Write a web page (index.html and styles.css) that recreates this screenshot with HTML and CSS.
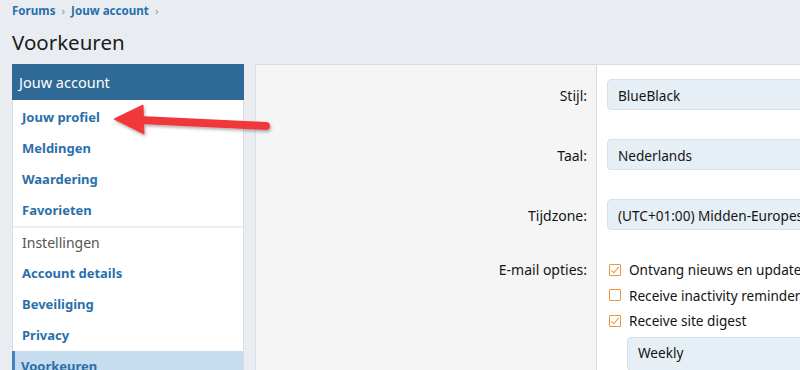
FILE: index.html
```html
<!DOCTYPE html>
<html lang="nl">
<head>
  <meta charset="utf-8">
  <title>Voorkeuren</title>
  <link rel="stylesheet" href="styles.css">
</head>
<body>
  <nav class="crumbs">
    <a href="#">Forums</a><span class="sep">&rsaquo;</span><a href="#">Jouw account</a><span class="sep">&rsaquo;</span>
  </nav>
  <h1 class="title">Voorkeuren</h1>

  <div class="page">
    <aside class="side">
      <h2 class="side-head">Jouw account</h2>
      <ul class="side-list first">
        <li><a href="#">Jouw profiel</a></li>
        <li><a href="#">Meldingen</a></li>
        <li><a href="#">Waardering</a></li>
        <li><a href="#">Favorieten</a></li>
      </ul>
      <h3 class="side-sub">Instellingen</h3>
      <ul class="side-list">
        <li><a href="#">Account details</a></li>
        <li><a href="#">Beveiliging</a></li>
        <li><a href="#">Privacy</a></li>
        <li class="active"><a href="#">Voorkeuren</a></li>
      </ul>
    </aside>

    <main class="form">
      <div class="row">
        <label class="label">Stijl:</label>
        <div class="field"><div class="select">BlueBlack</div></div>
      </div>
      <div class="row">
        <label class="label">Taal:</label>
        <div class="field"><div class="select">Nederlands</div></div>
      </div>
      <div class="row">
        <label class="label">Tijdzone:</label>
        <div class="field"><div class="select">(UTC+01:00) Midden-Europese standaardtijd</div></div>
      </div>
      <div class="row row-checks">
        <label class="label">E-mail opties:</label>
        <div class="field">
          <div class="check on"><span class="box"></span>Ontvang nieuws en update e-mails</div>
          <div class="check"><span class="box"></span>Receive inactivity reminder e-mails</div>
          <div class="check on"><span class="box"></span>Receive site digest</div>
          <div class="select sub">Weekly</div>
        </div>
      </div>
    </main>
  </div>

  <svg class="arrow" width="170" height="50" viewBox="105 100 170 50">
    <g fill="#f0393b" stroke="#f0393b" filter="url(#sh)">
      <line x1="140" y1="120" x2="266" y2="126" stroke-width="8" stroke-linecap="round"/>
      <polygon points="114,119 143,105 144,134" stroke-width="1" stroke-linejoin="round"/>
    </g>
    <defs>
      <filter id="sh" x="-20%" y="-50%" width="140%" height="200%">
        <feDropShadow dx="1" dy="2" stdDeviation="1.5" flood-color="#000" flood-opacity="0.3"/>
      </filter>
    </defs>
  </svg>
</body>
</html>
```

FILE: styles.css
```css
:root {
  --bg: #e9edf2;
  --link: #2a6fa9;
  --head: #2f6a96;
  --text: #141414;
  --line: #d8dde3;
  --input: #e7eff6;
  --check: #e8953f;
}
* {
  box-sizing: border-box;
  margin: 0;
  padding: 0;
}
html, body {
  overflow: hidden;
}
body {
  background: var(--bg);
  color: var(--text);
  font-family: "Noto Sans", "Open Sans", sans-serif;
  width: 800px;
  height: 370px;
  position: relative;
}
a { color: var(--link); text-decoration: none; }

.crumbs {
  padding: 2px 12px 0;
  height: 20px;
  font-size: 11.6px;
  font-weight: 700;
  line-height: 18px;
}
.crumbs .sep {
  color: #8a9aab;
  font-weight: 400;
  margin: 0 6px;
}
.title {
  font-size: 20.5px;
  font-weight: 400;
  line-height: 30px;
  padding: 7px 12px 7px;
  color: #1a1a1a;
}

.page {
  display: flex;
  gap: 11px;
  padding-left: 12px;
}
.side {
  width: 232px;
  flex: none;
  background: #fff;
  border: 1px solid var(--line);
  border-top: none;
}
.side-head {
  background: var(--head);
  color: #fff;
  font-size: 14.5px;
  font-weight: 400;
  height: 36px;
  line-height: 36px;
  padding-left: 7px;
  margin: 0 -1px;
}
.side-list { list-style: none; }
.side-list.first { padding-top: 2px; }
.side-list li {
  height: 31px;
  line-height: 31px;
  padding-left: 9px;
  font-size: 13px;
  font-weight: 700;
}
.side-sub {
  border-top: 2px solid #eceff2;
  font-size: 14px;
  font-weight: 400;
  color: #555;
  line-height: 29px;
  padding: 0 0 1px 9px;
}
.side-list li.active {
  background: #c6dcef;
  border-left: 3px solid #3d86c6;
  padding-left: 6px;
  margin-left: -1px;
}

.form {
  flex: 1;
  background: #fff;
  border-left: 1px solid var(--line);
  border-top: 1px solid var(--line);
  min-width: 0;
}
.row {
  display: grid;
  grid-template-columns: 341px 1fr;
}
.label {
  background: #f5f5f5;
  border-right: 1px solid #dadada;
  text-align: right;
  padding: 14px 9px 0 0;
  font-size: 14px;
  line-height: 34px;
  height: 60px;
}
.field {
  padding: 14px 0 15px 10px;
  white-space: nowrap;
  font-size: 13.6px;
}
.select {
  height: 31px;
  width: 320px;
  line-height: 28px;
  padding: 2px 0 0 10px;
  background: var(--input);
  border: 1px solid #d6e1ea;
  border-radius: 4px;
}
.row-checks .label {
  height: 126px;
  padding-top: 12px;
  line-height: 26px;
}
.row-checks .field { padding-top: 12px; padding-left: 12px; }
.check {
  display: flex;
  align-items: center;
  height: 25.5px;
}
.box {
  width: 12px;
  height: 12px;
  border: 1px solid var(--check);
  border-radius: 1px;
  margin-right: 8px;
  position: relative;
  background: #fff;
}
.check.on .box::after {
  content: "";
  position: absolute;
  left: 3px;
  top: 0px;
  width: 3px;
  height: 7px;
  border: solid var(--check);
  border-width: 0 1.5px 1.5px 0;
  transform: rotate(40deg);
}
.select.sub {
  margin: 3px 0 0 18px;
  height: 34px;
  line-height: 30px;
  padding-top: 0;
}

.arrow {
  position: absolute;
  left: 105px;
  top: 100px;
}
```
